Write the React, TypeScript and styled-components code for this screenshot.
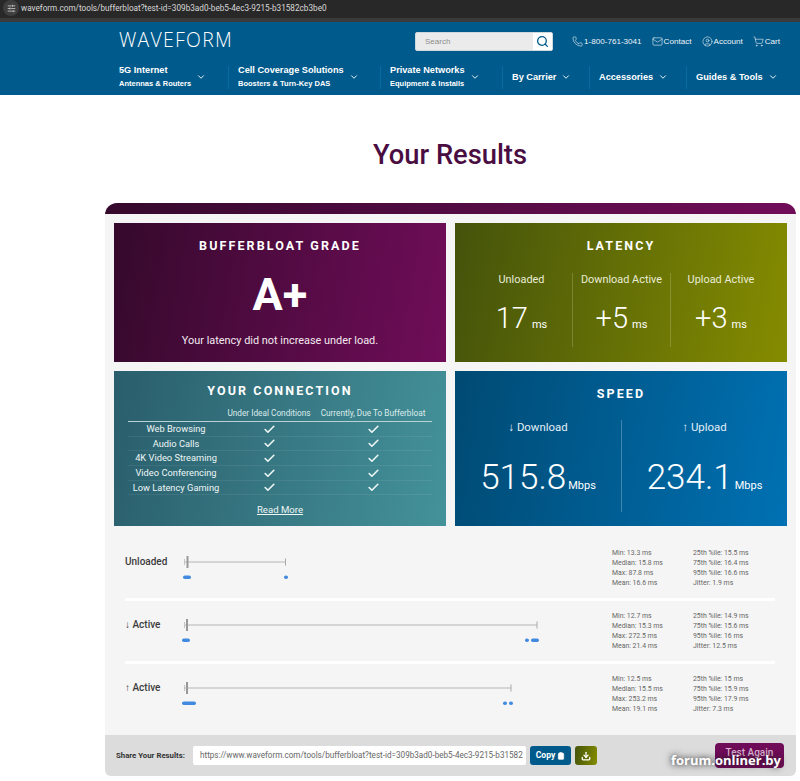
import React from "react";
import styled, { createGlobalStyle } from "styled-components";
import { Phone, Mail, CircleUser, ShoppingCart, Search, ChevronDown, Check, SlidersHorizontal, Download, Clipboard } from "lucide-react";

const Global = createGlobalStyle`
  html, body { margin: 0; padding: 0; background: #fff; overflow: hidden; }
  * { box-sizing: border-box; }
  body { font-family: "Roboto", "Noto Sans", sans-serif; }
`;
const sans = `"Liberation Sans", Arial, sans-serif`;
const ui = `"Roboto", "Noto Sans", sans-serif`;

const BrowserBar = styled.div`
  height: 22px; background: #282828; border-bottom: 4px solid #3b3b3b;
  display: flex; align-items: flex-start; padding-left: 3px; gap: 2px;
  color: #d8d8d8; font: 8.2px/17px ${ui};
`;
const SiteBadge = styled.span`
  width: 16px; height: 16px; border-radius: 50%; background: #3e3e3e; color: #d8d8d8;
  display: flex; align-items: center; justify-content: center;
`;
const Header = styled.header`
  height: 73px; background: #005a8c; padding-left: 119px; color: #fff; font-family: ${sans};
  display: flex; flex-direction: column;
`;
const TopRow = styled.div`
  height: 38px; display: flex; align-items: center;
`;
const Logo = styled.div`
  width: 296px; font: 300 19.4px/1 "Open Sans", sans-serif; letter-spacing: 1.3px; color: #fff; margin-top: -2px;
`;
const SearchBox = styled.div`
  width: 138px; height: 19px; display: flex; background: #ebebeb; border-radius: 2px; overflow: hidden; border: 1px solid #cfd8df;
`;
const SearchText = styled.div`
  flex: 1; color: #8b8b8b; font-size: 8px; line-height: 17px; padding-left: 9px;
`;
const SearchBtn = styled.div`
  width: 19px; background: #fff; color: #005a8c; display: flex; align-items: center; justify-content: center;
`;
const Utility = styled.div`
  display: flex; align-items: center; margin-left: 19px; gap: 10px; font-size: 8.1px; color: #eef4f8;
`;
const UtilItem = styled.span`
  display: flex; align-items: center; gap: 1px;
`;
const NavRow = styled.nav`
  display: flex; align-items: center; height: 24px; margin-top: 5px;
`;
const NavItem = styled.div<{ $w: number; $first?: boolean }>`
  width: ${(p) => p.$w}px; height: 23px; display: flex; align-items: center; gap: 5px;
  padding-left: ${(p) => (p.$first ? 0 : 9)}px;
  border-left: ${(p) => (p.$first ? "none" : "1px solid #0b6b9f")};
`;
const NavTitle = styled.div`
  font-size: 9.2px; font-weight: 700; line-height: 13px; white-space: nowrap;
`;
const NavSub = styled.div`
  font-size: 7.5px; font-weight: 700; line-height: 13px; white-space: nowrap;
`;
const Title = styled.h1`
  margin: 0 0 0 100px; padding-top: 42px; height: 108px; text-align: center; width: 700px;
  font: 500 27.3px/36px ${ui}; color: #4a0d42;
`;
const Card = styled.main`
  width: 691px; margin-left: 105px; border-radius: 12px 12px 6px 6px; overflow: hidden; background: #f5f5f5;
`;
const TopStrip = styled.div`
  height: 11px; background: linear-gradient(90deg, #35092c, #700d59);
`;
const Tiles = styled.div`
  display: grid; grid-template-columns: 332px 332px; column-gap: 9px; row-gap: 9px;
  grid-template-rows: 139px 155px; padding: 9px 9px 0;
`;
const Tile = styled.section<{ $from: string; $to: string }>`
  background: linear-gradient(100deg, ${(p) => p.$from}, ${(p) => p.$to}); color: #fff; text-align: center;
  display: flex; flex-direction: column; align-items: center; font-family: ${ui};
`;
const TileTitle = styled.h2<{ $top: number }>`
  margin: ${(p) => p.$top}px 0 0; font: 700 12.5px/16px ${ui}; letter-spacing: 2.1px; white-space: nowrap;
`;
const Grade = styled.div`
  font: 700 45px/52px ${ui}; margin-top: 15px;
`;
const Caption = styled.div`
  font: 400 10.9px/14px ${ui}; margin-top: 13px; color: #f3e9f0;
`;
const Cols = styled.div`
  display: flex; margin-top: 19px; height: 74px;
`;
const LatCol = styled.div<{ $w: number; $line?: boolean }>`
  width: ${(p) => p.$w}px; border-left: ${(p) => (p.$line ? "1px solid rgba(255,255,255,.18)" : "none")};
`;
const ColLabel = styled.div`
  font: 400 10.9px/14px ${ui}; color: #e9edd6; white-space: nowrap;
`;
const ValueRow = styled.div`
  margin-top: 13px; font: 300 29px/36px ${ui}; white-space: nowrap;
`;
const Unit = styled.span<{ $gap?: number }>`
  font-size: 11px; margin-left: ${(p) => p.$gap ?? 4}px; font-weight: 400;
`;
const ConnTable = styled.div`
  width: 304px; margin-top: 7px; font: 400 9.3px/14px ${ui};
`;
const ConnHead = styled.div`
  display: grid; grid-template-columns: 96px 90px 118px; height: 16px; border-bottom: 1.5px solid #b9d3d5; color: #dcebec; font-size: 8.25px;
`;
const ConnRow = styled.div`
  display: grid; grid-template-columns: 96px 90px 118px; height: 14.7px; line-height: 14px; align-items: center;
  justify-items: center; border-bottom: 1px solid rgba(255,255,255,.07); color: #eef6f6; white-space: nowrap;
`;
const ReadMore = styled.a`
  margin-top: 8px; font: 400 9.6px/14px ${ui}; text-decoration: underline; color: #eef6f6;
`;
const SpeedCols = styled.div`
  display: flex; margin-top: 18px; height: 92px;
`;
const SpeedCol = styled.div<{ $line?: boolean }>`
  width: 166px; border-left: ${(p) => (p.$line ? "1px solid rgba(255,255,255,.25)" : "none")};
`;
const SpeedLabel = styled.div`
  font: 400 11.4px/14px ${ui}; color: #e4eff6;
`;
const SpeedValue = styled.div`
  margin-top: 24px; font: 300 35px/40px ${ui}; white-space: nowrap;
`;
const Rows = styled.div`
  margin: 0 21px 0 20px; padding-top: 12px;
`;
const Row = styled.div<{ $h: number }>`
  height: ${(p) => p.$h}px; display: flex; align-items: flex-start; padding-top: 11px;
  & + & { border-top: 3px solid #fff; }
`;
const RowLabel = styled.div`
  width: 56px; font: 500 10px/14px ${ui}; color: #3c3c3c; margin-top: 6px; white-space: nowrap;
`;
const Plot = styled.svg`
  display: block; width: 372px; height: 44px; margin-top: 6px; flex: none;
`;
const Stats = styled.div`
  margin-left: 59px; display: grid; grid-template-columns: 81px 81px; font: 400 6.9px/9.9px ${ui}; color: #666; white-space: nowrap;
`;
const ShareBar = styled.div`
  height: 41px; margin-top: 11px; background: #dcdcdc; display: flex; align-items: center; padding-left: 11px; position: relative;
  font-family: ${ui};
`;
const ShareLabel = styled.span`
  width: 77px; font: 700 7.8px/1 ${ui}; color: #333; white-space: nowrap;
`;
const ShareInput = styled.div`
  width: 333px; height: 19px; background: #fff; border-radius: 2px; color: #666; padding: 0 0 0 7px; overflow: hidden;
  font: 400 8.15px/19px ${ui}; white-space: nowrap;
`;
const SmallBtn = styled.button<{ $bg: string; $w: number }>`
  width: ${(p) => p.$w}px; height: 19px; margin-left: 4px; border: 0; border-radius: 3px; background: ${(p) => p.$bg}; color: #fff; padding: 0;
  display: flex; align-items: center; justify-content: center; gap: 2px; font: 700 8.6px/1 ${ui};
`;
const Again = styled.button`
  width: 69px; height: 25px; margin-left: 118px; border: 0; border-radius: 4px; background: #700d59; color: #ddb9d3;
  font: 500 10px/1 ${ui}; padding: 0 0 6px;
`;
const Watermark = styled.div`
  position: absolute; left: 566px; top: 17px; font: 700 13px/16px "Open Sans", sans-serif; color: #fff; white-space: nowrap;
  text-shadow: 0 0 5px rgba(40,40,40,.75), 0 0 9px rgba(40,40,40,.6);
`;

const Chev = () => <ChevronDown size={10} strokeWidth={2.2} />;

type Dot = [number, number];
const WhiskerPlot = ({ end, tick, dots, y }: { end: number; tick: number; dots: Dot[]; y: number }) => (
  <Plot viewBox="0 0 372 44">
    <line x1="3.5" x2={end} y1={y} y2={y} stroke="#b5b5b5" strokeWidth="1.2" />
    <line x1="3.5" x2="3.5" y1={y - 3} y2={y + 3} stroke="#c4c4c4" />
    <line x1={end} x2={end} y1={y - 3.5} y2={y + 3.5} stroke="#a9a9a9" />
    <line x1={tick} x2={tick} y1={y - 6} y2={y + 6} stroke="#999" strokeWidth="2" />
    {dots.map(([a, b]) => (
      <rect key={a} x={a} y={y + 13.5} width={b - a} height="3.6" rx="1.8" fill="#418ae0" />
    ))}
  </Plot>
);

const Stat = ({ a, b }: { a: string[]; b: string[] }) => (
  <Stats>
    <div>{a.map((t) => <div key={t}>{t}</div>)}</div>
    <div>{b.map((t) => <div key={t}>{t}</div>)}</div>
  </Stats>
);

const conn = ["Web Browsing", "Audio Calls", "4K Video Streaming", "Video Conferencing", "Low Latency Gaming"];

export default function App() {
  return (
    <>
      <Global />
      <BrowserBar>
        <SiteBadge><SlidersHorizontal size={9} /></SiteBadge>
        <span>waveform.com/tools/bufferbloat?test-id=309b3ad0-beb5-4ec3-9215-b31582cb3be0</span>
      </BrowserBar>
      <Header>
        <TopRow>
          <Logo>WAVEFORM</Logo>
          <SearchBox>
            <SearchText>Search</SearchText>
            <SearchBtn><Search size={13} strokeWidth={2.4} /></SearchBtn>
          </SearchBox>
          <Utility>
            <UtilItem><Phone size={11} strokeWidth={1.3} />1-800-761-3041</UtilItem>
            <UtilItem><Mail size={11} strokeWidth={1.3} />Contact</UtilItem>
            <UtilItem><CircleUser size={11} strokeWidth={1.3} />Account</UtilItem>
            <UtilItem><ShoppingCart size={11} strokeWidth={1.3} />Cart</UtilItem>
          </Utility>
        </TopRow>
        <NavRow>
          <NavItem $first $w={109}>
            <div><NavTitle>5G Internet</NavTitle><NavSub>Antennas &amp; Routers</NavSub></div><Chev />
          </NavItem>
          <NavItem $w={152}>
            <div><NavTitle>Cell Coverage Solutions</NavTitle><NavSub>Boosters &amp; Turn-Key DAS</NavSub></div><Chev />
          </NavItem>
          <NavItem $w={122}>
            <div><NavTitle>Private Networks</NavTitle><NavSub>Equipment &amp; Installs</NavSub></div><Chev />
          </NavItem>
          <NavItem $w={87}><NavTitle>By Carrier</NavTitle><Chev /></NavItem>
          <NavItem $w={97}><NavTitle>Accessories</NavTitle><Chev /></NavItem>
          <NavItem $w={96}><NavTitle>Guides &amp; Tools</NavTitle><Chev /></NavItem>
        </NavRow>
      </Header>
      <Title>Your Results</Title>
      <Card>
        <TopStrip />
        <Tiles>
          <Tile $from="#35092c" $to="#700d59">
            <TileTitle $top={15}>BUFFERBLOAT GRADE</TileTitle>
            <Grade>A+</Grade>
            <Caption>Your latency did not increase under load.</Caption>
          </Tile>
          <Tile $from="#44530b" $to="#858c00">
            <TileTitle $top={15}>LATENCY</TileTitle>
            <Cols>
              <LatCol $w={101}><ColLabel>Unloaded</ColLabel><ValueRow>17<Unit>ms</Unit></ValueRow></LatCol>
              <LatCol $w={98} $line><ColLabel>Download Active</ColLabel><ValueRow>+5<Unit>ms</Unit></ValueRow></LatCol>
              <LatCol $w={101} $line><ColLabel>Upload Active</ColLabel><ValueRow>+3<Unit>ms</Unit></ValueRow></LatCol>
            </Cols>
          </Tile>
          <Tile $from="#2a5e6c" $to="#44929a">
            <TileTitle $top={12}>YOUR CONNECTION</TileTitle>
            <ConnTable>
              <ConnHead>
                <span />
                <span>Under Ideal Conditions</span>
                <span>Currently, Due To Bufferbloat</span>
              </ConnHead>
              {conn.map((c) => (
                <ConnRow key={c}>
                  <span>{c}</span>
                  <Check size={13} strokeWidth={3} />
                  <Check size={13} strokeWidth={3} />
                </ConnRow>
              ))}
            </ConnTable>
            <ReadMore>Read More</ReadMore>
          </Tile>
          <Tile $from="#004a73" $to="#0071b3">
            <TileTitle $top={15}>SPEED</TileTitle>
            <SpeedCols>
              <SpeedCol><SpeedLabel>↓ Download</SpeedLabel><SpeedValue>515.8<Unit $gap={2}>Mbps</Unit></SpeedValue></SpeedCol>
              <SpeedCol $line><SpeedLabel>↑ Upload</SpeedLabel><SpeedValue>234.1<Unit $gap={2}>Mbps</Unit></SpeedValue></SpeedCol>
            </SpeedCols>
          </Tile>
        </Tiles>
        <Rows>
          <Row $h={60}>
            <RowLabel>Unloaded</RowLabel>
            <WhiskerPlot y={7} end={104.5} tick={6.5} dots={[[2, 10], [103, 107]]} />
            <Stat a={["Min: 13.3 ms", "Median: 15.8 ms", "Max: 87.8 ms", "Mean: 16.6 ms"]} b={["25th %ile: 15.5 ms", "75th %ile: 16.4 ms", "95th %ile: 16.6 ms", "Jitter: 1.9 ms"]} />
          </Row>
          <Row $h={63}>
            <RowLabel>↓ Active</RowLabel>
            <WhiskerPlot y={7} end={356} tick={6} dots={[[1, 9], [344, 348], [350, 358]]} />
            <Stat a={["Min: 12.7 ms", "Median: 15.3 ms", "Max: 272.5 ms", "Mean: 21.4 ms"]} b={["25th %ile: 14.9 ms", "75th %ile: 15.6 ms", "95th %ile: 16 ms", "Jitter: 12.5 ms"]} />
          </Row>
          <Row $h={63}>
            <RowLabel>↑ Active</RowLabel>
            <WhiskerPlot y={7} end={330} tick={6} dots={[[1, 15], [322, 326], [328, 332]]} />
            <Stat a={["Min: 12.5 ms", "Median: 15.5 ms", "Max: 253.2 ms", "Mean: 19.1 ms"]} b={["25th %ile: 15 ms", "75th %ile: 15.9 ms", "95th %ile: 17.9 ms", "Jitter: 7.3 ms"]} />
          </Row>
        </Rows>
        <ShareBar>
          <ShareLabel>Share Your Results:</ShareLabel>
          <ShareInput>https://www.waveform.com/tools/bufferbloat?test-id=309b3ad0-beb5-4ec3-9215-b31582</ShareInput>
          <SmallBtn $bg="#005a8c" $w={41}>Copy <Clipboard size={8} fill="#fff" /></SmallBtn>
          <SmallBtn $bg="linear-gradient(100deg,#44530b,#858c00)" $w={22}><Download size={10} strokeWidth={3} /></SmallBtn>
          <Again>Test Again</Again>
          <Watermark>forum.onliner.by</Watermark>
        </ShareBar>
      </Card>
    </>
  );
}
